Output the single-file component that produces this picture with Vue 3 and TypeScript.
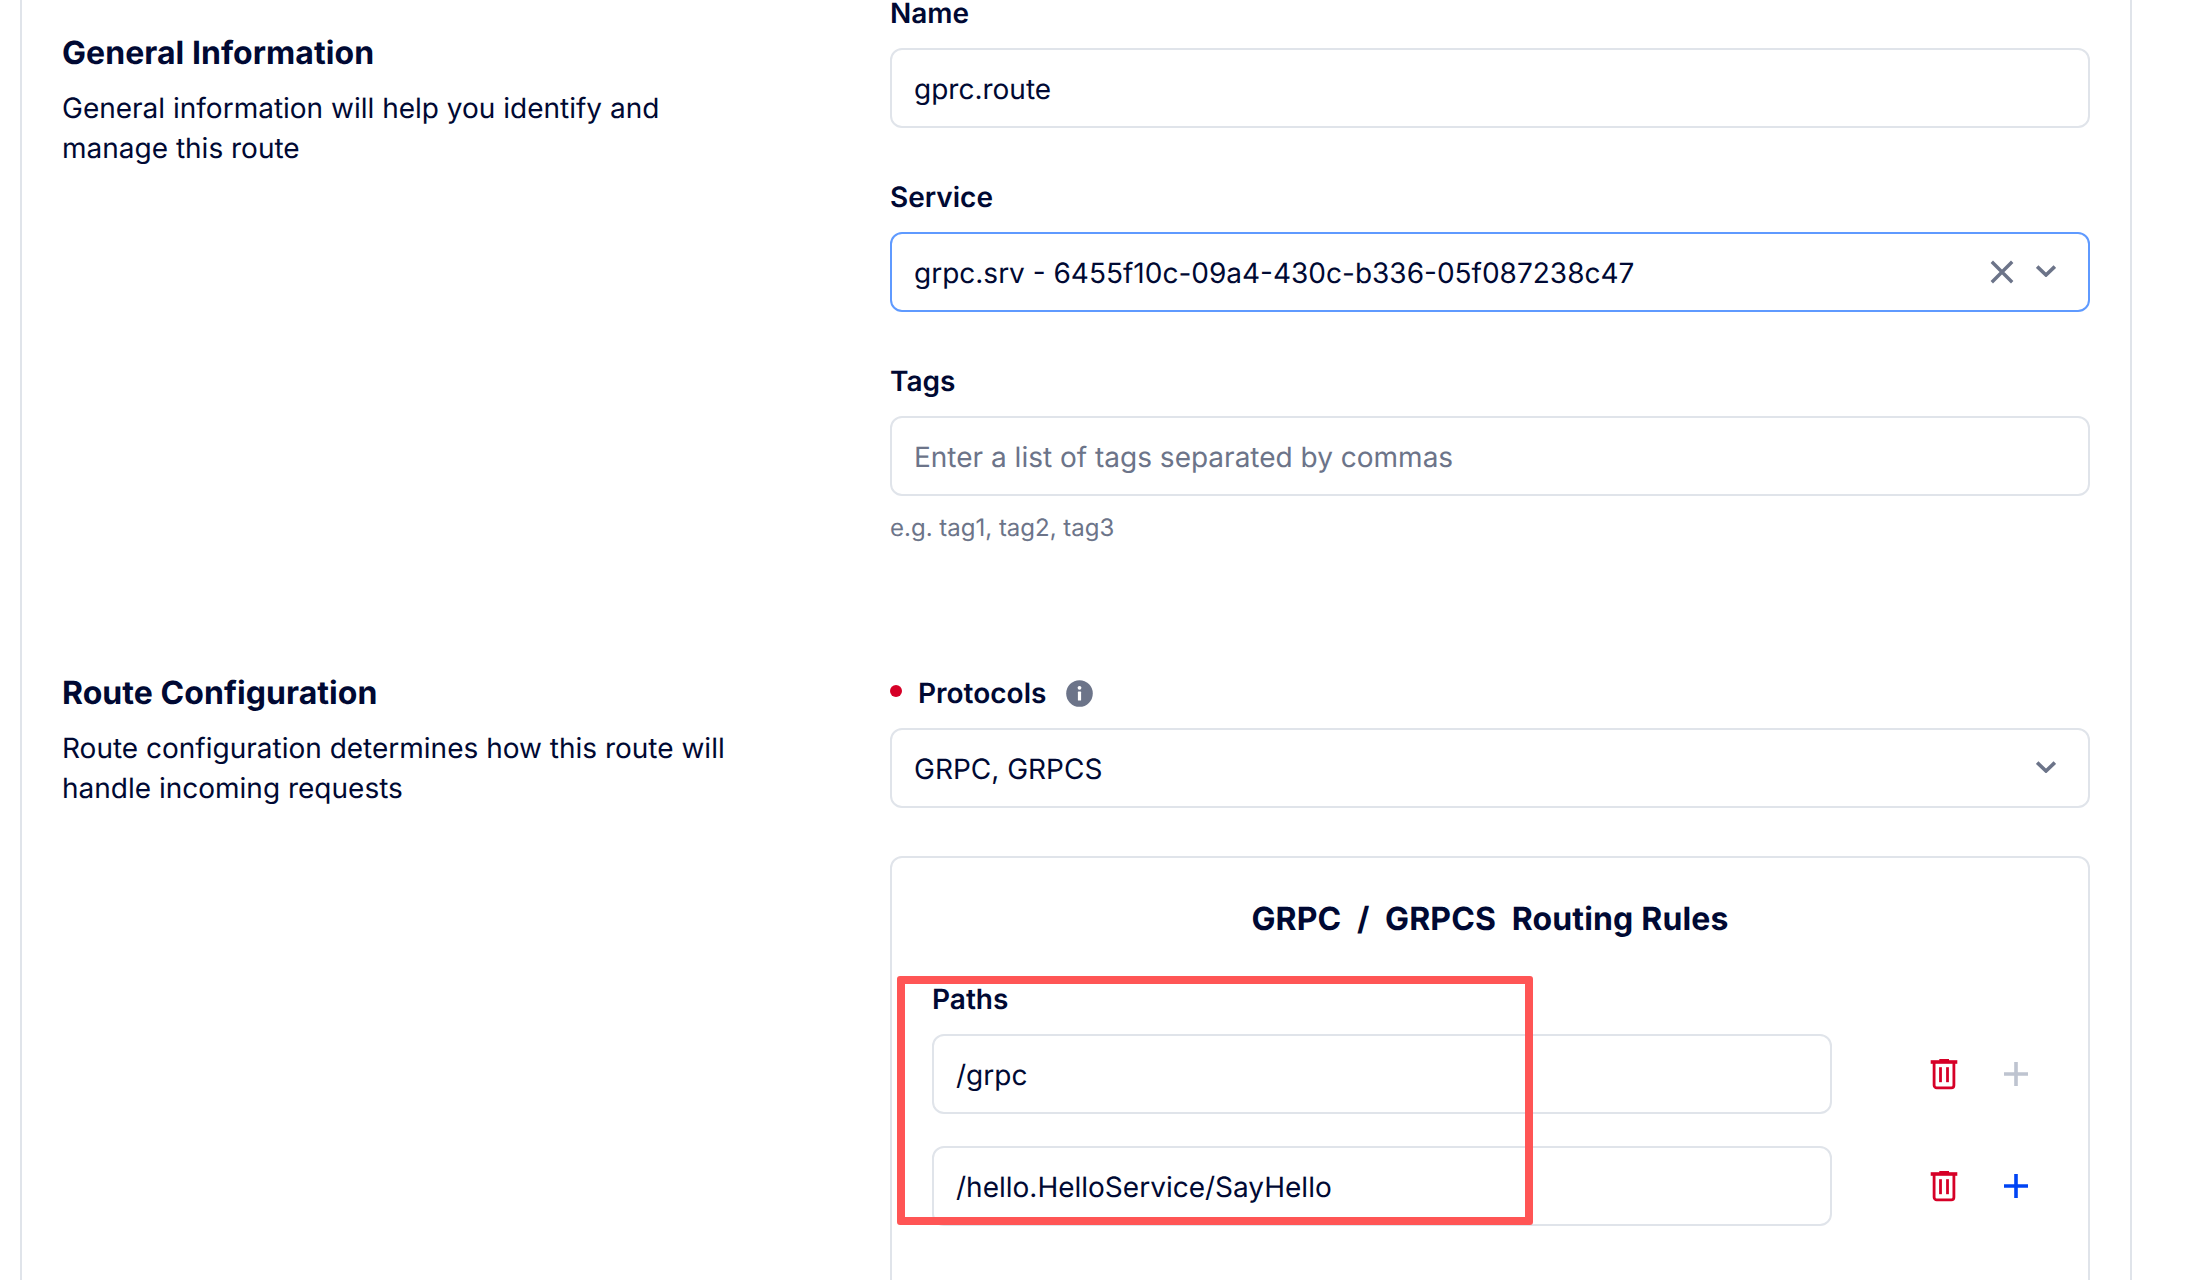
<script setup lang="ts">
interface PathRow {
  value: string
  canAdd: boolean
}
const paths: PathRow[] = [
  { value: '/grpc', canAdd: false },
  { value: '/hello.HelloService/SayHello', canAdd: true },
]
</script>

<template>
  <div class="viewport">
    <main class="panel">
      <section class="section first">
        <div class="intro">
          <h2>General Information</h2>
          <p>General information will help you identify and manage this route</p>
        </div>
        <div class="form shifted">
          <div class="field">
            <label>Name</label>
            <div class="input">gprc.route</div>
          </div>
          <div class="field">
            <label>Service</label>
            <div class="input focused">
              <span class="grow">grpc.srv - 6455f10c-09a4-430c-b336-05f087238c47</span>
              <svg class="clear" width="24" height="24" viewBox="0 0 24 24" fill="none">
                <path d="M1.8 1.8 22.2 22.2M22.2 1.8 1.8 22.2" stroke="#6c7489" stroke-width="3.4" />
              </svg>
              <svg class="chevron" width="20" height="12" viewBox="0 0 20 12" fill="none">
                <path d="M1.2 1.6 10 10 18.8 1.6" stroke="#6c7489" stroke-width="3.6" />
              </svg>
            </div>
          </div>
          <div class="field">
            <label>Tags</label>
            <div class="input placeholder">Enter a list of tags separated by commas</div>
            <div class="help">e.g. tag1, tag2, tag3</div>
          </div>
        </div>
      </section>

      <section class="section second">
        <div class="intro">
          <h2>Route Configuration</h2>
          <p>Route configuration determines how this route will handle incoming requests</p>
        </div>
        <div class="form">
          <div class="field">
            <label class="required">
              <span class="dot"></span>
              <span>Protocols</span>
              <svg class="info" width="27" height="27" viewBox="0 0 27 27">
                <circle cx="13.5" cy="13.5" r="13.3" fill="#6c7489" />
                <rect x="11.9" y="11.6" width="3.2" height="9" rx="0.6" fill="#fff" />
                <circle cx="13.5" cy="7.8" r="1.9" fill="#fff" />
              </svg>
            </label>
            <div class="input">
              <span class="grow">GRPC, GRPCS</span>
              <svg class="chevron" width="20" height="12" viewBox="0 0 20 12" fill="none">
                <path d="M1.2 1.6 10 10 18.8 1.6" stroke="#6c7489" stroke-width="3.6" />
              </svg>
            </div>
          </div>

          <div class="card">
            <h3 class="rules-title">GRPC&nbsp; /&nbsp; GRPCS&nbsp; Routing Rules</h3>
            <label class="paths-label">Paths</label>
            <div class="rows">
              <div v-for="row in paths" :key="row.value" class="row">
                <div class="input path">{{ row.value }}</div>
                <div class="actions">
                  <svg width="32" height="32" viewBox="0 0 32 32" fill="none">
                    <rect x="11.3" y="1" width="9.7" height="3" fill="#d60027" />
                    <rect x="2.7" y="2.2" width="26.6" height="3.6" fill="#d60027" />
                    <path d="M6.1 5v22.2a2.6 2.6 0 0 0 2.6 2.6h14.6a2.6 2.6 0 0 0 2.6-2.6V5" stroke="#d60027" stroke-width="2.8" />
                    <rect x="11.1" y="9.2" width="2.8" height="15" fill="#d60027" />
                    <rect x="18.1" y="9.2" width="2.8" height="15" fill="#d60027" />
                  </svg>
                  <svg class="plus" width="24" height="24" viewBox="0 0 24 24" fill="none">
                    <path d="M12 0v24M0 12h24" :stroke="row.canAdd ? '#0044f4' : '#bec4d0'" stroke-width="3.6" />
                  </svg>
                </div>
              </div>
            </div>
            <div class="highlight"></div>
          </div>
        </div>
      </section>
    </main>
  </div>
</template>

<style>
html,
body {
  margin: 0;
  background: #fff;
}
</style>

<style scoped>
.viewport {
  width: 2192px;
  height: 1280px;
  overflow: hidden;
  background: #fff;
  font-family: Inter, "Noto Sans", sans-serif;
  color: #000933;
  text-rendering: geometricPrecision;
}
.panel {
  width: 2112px;
  min-height: 1400px;
  margin-left: 20px;
  padding: 32px 40px 0;
  box-sizing: border-box;
  border-left: 2px solid #e0e4ea;
  border-right: 2px solid #e0e4ea;
}
.section {
  display: grid;
  grid-template-columns: 828px 1200px;
}
.second {
  margin-top: 128px;
}
.intro h2 {
  margin: 0;
  padding-top: 1px;
  font-size: 32px;
  line-height: 40px;
  font-weight: 700;
  letter-spacing: 0.06px;
}
.intro p {
  margin: 15px 0 0;
  width: 700px;
  font-size: 28px;
  line-height: 40px;
  font-weight: 400;
}
.second .intro p {
  width: 750px;
}
.form {
  display: flex;
  flex-direction: column;
  gap: 48px;
}
.shifted {
  margin-top: -40px;
}
label {
  display: block;
  padding-top: 1px;
  font-size: 28px;
  line-height: 40px;
  font-weight: 600;
  margin-bottom: 15px;
}
.input {
  display: flex;
  align-items: center;
  height: 80px;
  box-sizing: border-box;
  padding: 1px 22px 0;
  border: 2px solid #e0e4ea;
  border-radius: 12px;
  background: #fff;
  font-size: 28px;
  line-height: 40px;
}
.focused {
  border-color: #5f9aff;
}
.placeholder {
  color: #6c7489;
}
.grow {
  flex: 1;
}
.clear {
  margin-right: 22px;
  margin-top: -1px;
}
.chevron {
  margin-right: 10px;
  margin-top: -3px;
}
.help {
  margin-top: 16px;
  font-size: 24px;
  line-height: 32px;
  color: #6c7489;
}
.required {
  display: flex;
  align-items: center;
}
.dot {
  width: 12px;
  height: 12px;
  border-radius: 50%;
  background: #d60027;
  margin-right: 16px;
  margin-top: -4px;
}
.info {
  margin-left: 20px;
}
.card {
  position: relative;
  box-sizing: border-box;
  padding: 39px 40px 80px;
  border: 2px solid #e0e4ea;
  border-radius: 12px;
}
.rules-title {
  margin: 0 0 37px;
  text-align: center;
  font-size: 32px;
  line-height: 44px;
  font-weight: 700;
  letter-spacing: 0.16px;
}
.paths-label {
  margin-bottom: 15px;
}
.rows {
  display: flex;
  flex-direction: column;
  gap: 32px;
}
.row {
  display: flex;
  align-items: center;
}
.path {
  width: 900px;
  flex: none;
}
.actions {
  display: flex;
  align-items: center;
  margin-left: 96px;
}
.plus {
  margin-left: 44px;
}
.highlight {
  position: absolute;
  left: 5px;
  top: 118px;
  width: 636px;
  height: 249px;
  box-sizing: border-box;
  border: 8px solid #ff5555;
  border-radius: 3px;
}
</style>
